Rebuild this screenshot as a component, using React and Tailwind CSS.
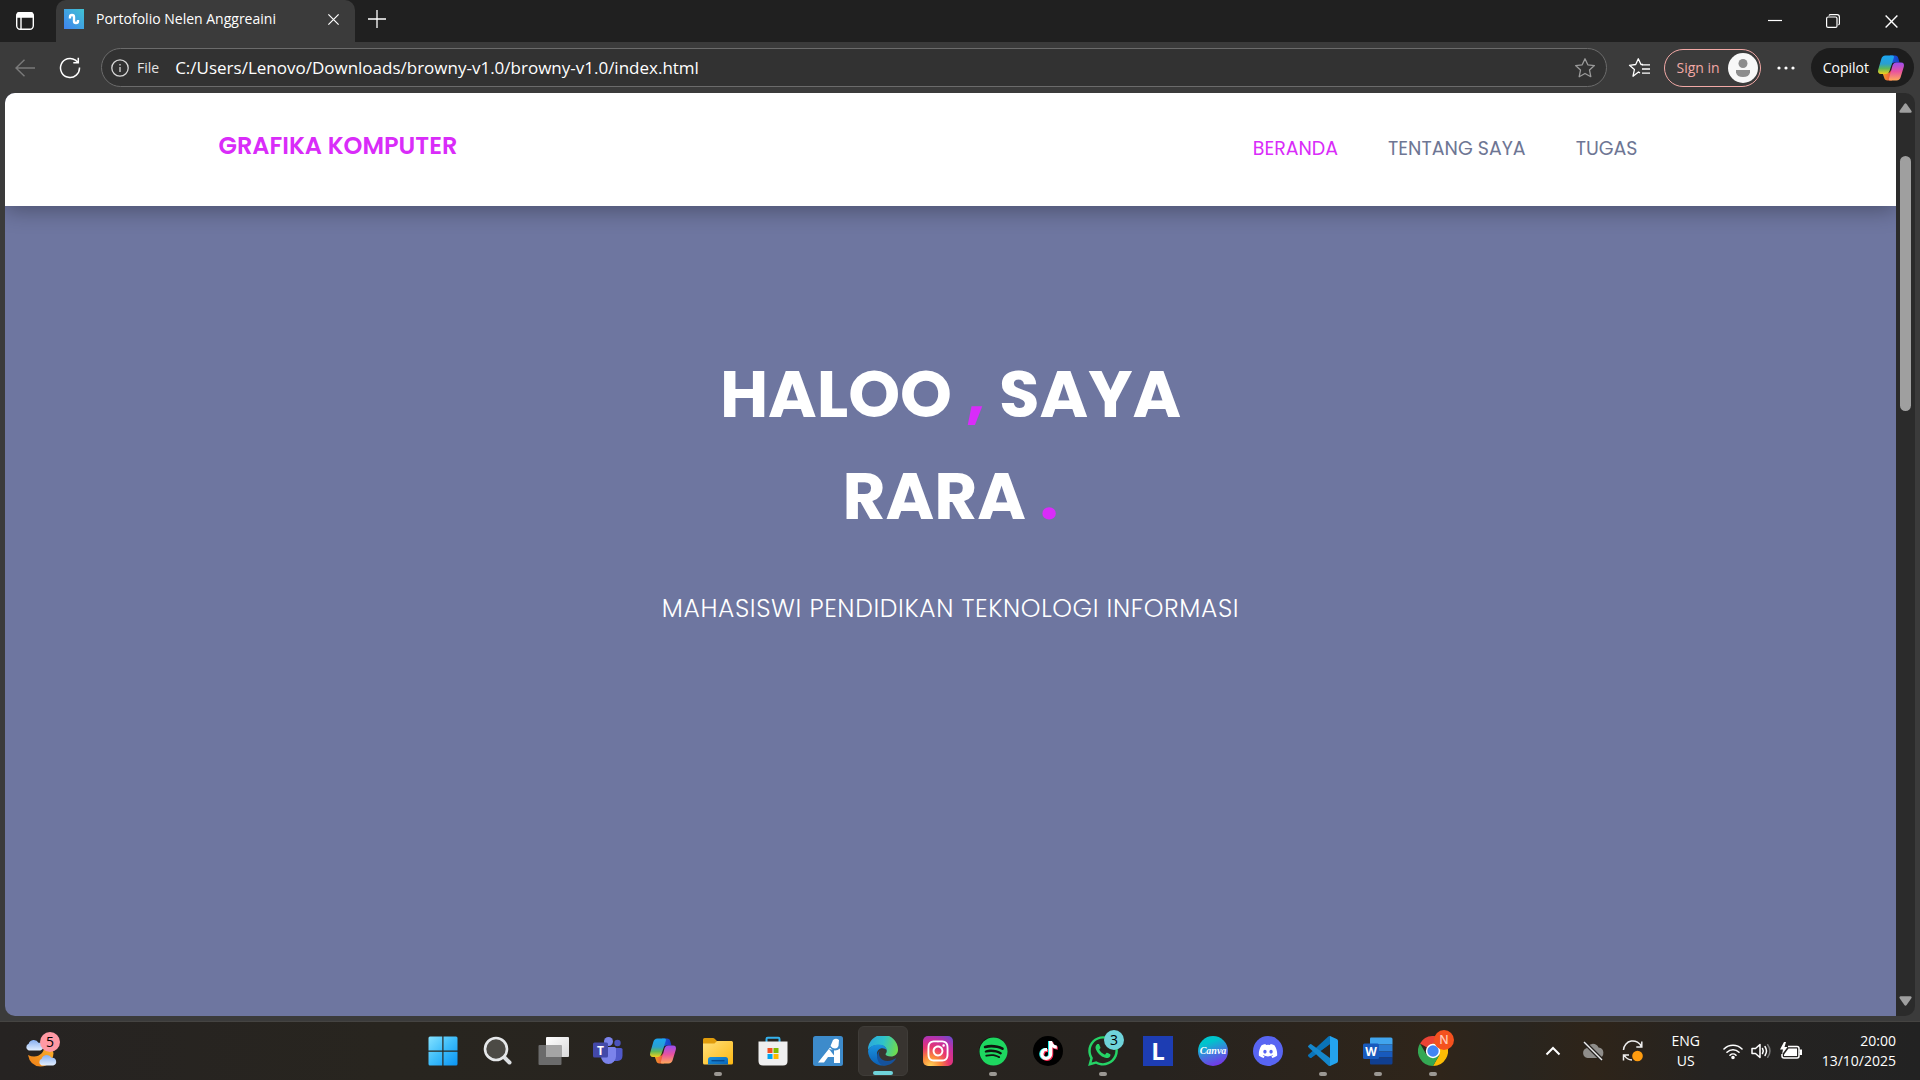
import React from "react";
import { FaInstagram, FaSpotify, FaTiktok, FaWhatsapp, FaDiscord } from "react-icons/fa6";

const UI = "font-['Segoe_UI','Open_Sans','Noto_Sans',sans-serif]";

function TabsIcon() {
  return (
    <svg width="20" height="20" viewBox="0 0 20 20" fill="none" stroke="#fff" strokeWidth="1.4">
      <rect x="1.7" y="1.7" width="16.6" height="16.6" rx="3.5" />
      <path d="M2 3.5a2 2 0 0 1 2-1.8h12a2 2 0 0 1 2 1.8V6H2z" fill="#fff" />
      <path d="M6 6v12" />
    </svg>
  );
}

function CloseIcon({ size = 14 }) {
  return (
    <svg width={size} height={size} viewBox="0 0 14 14" stroke="#fff" strokeWidth="1.3">
      <path d="M1.5 1.5l11 11M12.5 1.5l-11 11" />
    </svg>
  );
}

function StarIcon({ color }) {
  return (
    <svg width="22" height="22" viewBox="0 0 22 22" fill="none" stroke={color} strokeWidth="1.3" strokeLinejoin="round">
      <path d="M11 1.8l2.8 6 6.6.8-4.9 4.5 1.3 6.6L11 16.500l-5.800 3.200 1.300-6.600L1.600 8.600l6.600-.8z" />
    </svg>
  );
}

function CopilotIcon({ size }) {
  return (
    <svg width={size} height={size} viewBox="0 0 28 28">
      <defs>
        <linearGradient id="cpA" x1="0" y1="0" x2="0" y2="1">
          <stop offset="0" stopColor="#1ba6f2" />
          <stop offset=".45" stopColor="#2a9fd0" />
          <stop offset=".7" stopColor="#5fb85a" />
          <stop offset="1" stopColor="#f2cf1d" />
        </linearGradient>
        <linearGradient id="cpB" x1="0" y1="0" x2="0" y2="1">
          <stop offset="0" stopColor="#9a4df0" />
          <stop offset=".5" stopColor="#e8539f" />
          <stop offset="1" stopColor="#ffa95a" />
        </linearGradient>
        <linearGradient id="cpC" x1="0" y1="0" x2="1" y2="0">
          <stop offset="0" stopColor="#1a5be0" />
          <stop offset="1" stopColor="#173fc4" />
        </linearGradient>
        <linearGradient id="cpD" x1="0" y1="0" x2="1" y2="0">
          <stop offset="0" stopColor="#f0a027" />
          <stop offset="1" stopColor="#f0483f" />
        </linearGradient>
      </defs>
      <path d="M13 1.500h5c2 0 2.800 1 3.300 2.700L22.500 8.500h-5c-2 0-3 1-3.500 3z" fill="url(#cpC)" />
      <path d="M15 26.500h-4.500c-2 0-2.800-1-3.300-2.700L5.500 19h5c2 0 3-1 3.500-3z" fill="url(#cpD)" />
      <path d="M8.500 1.500h7c1.300 0 1.700.8 1.300 2.200L12.500 17c-.7 2-2 3-4 3H4c-2.500 0-3.500-1.500-2.800-4.200L4.300 5c.6-2.300 2-3.500 4.200-3.500z" fill="url(#cpA)" />
      <path d="M19.500 8.500H24c2.500 0 3.500 1.500 2.800 4.200L23.700 23c-.6 2.300-2 3.500-4.200 3.500h-6.700c-1 0-1.200-.7-.9-1.700L15.500 11.500c.7-2 2-3 4-3z" fill="url(#cpB)" />
    </svg>
  );
}

function TitleBar() {
  return (
    <header className="flex h-[42px] items-stretch bg-[#202020]">
      <button aria-label="Tab actions" className="flex w-14 items-center justify-start rounded-br-lg pl-[15px]">
        <TabsIcon />
      </button>
      <div className="flex w-[299px] items-center rounded-t-[10px] bg-[#3b3b3b] pr-3 pl-2 pb-1">
        <svg width="20" height="20" viewBox="0 0 20 20">
          <defs>
            <linearGradient id="fav" x1="0" y1="1" x2="1" y2="0">
              <stop offset="0" stopColor="#3f83ef" />
              <stop offset="1" stopColor="#41c3d3" />
            </linearGradient>
          </defs>
          <rect width="20" height="20" fill="url(#fav)" />
          <path d="M6 9.500V8a2 2 0 0 1 4 0v4a2 2 0 0 0 4 0v-1" fill="none" stroke="#fff" strokeWidth="2.400" />
        </svg>
        <span className="ml-3 flex-1 truncate text-sm text-white">Portofolio Nelen Anggreaini</span>
        <button aria-label="Close tab" className="flex size-5 items-center justify-center"><CloseIcon size={13} /></button>
      </div>
      <button aria-label="New tab" className="flex w-11 items-center justify-center pb-1">
        <svg width="18" height="18" viewBox="0 0 18 18" stroke="#fff" strokeWidth="1.3"><path d="M9 0v18M0 9h18" /></svg>
      </button>
      <div className="flex-1" />
      <div className="flex">
        <button aria-label="Minimize" className="flex w-[58px] items-center justify-center">
          <svg width="14" height="14" viewBox="0 0 14 14" stroke="#fff" strokeWidth="1.2"><path d="M0 6.500h14" /></svg>
        </button>
        <button aria-label="Restore" className="flex w-[58px] items-center justify-center">
          <svg width="14" height="14" viewBox="0 0 14 14" fill="none" stroke="#fff" strokeWidth="1.2">
            <rect x=".6" y="3" width="10.400" height="10.400" rx="1.500" />
            <path d="M3 1.600Q3.400.6 4.500.6h6.500a2.400 2.400 0 0 1 2.400 2.400v6.500q0 1-1 1.500" />
          </svg>
        </button>
        <button aria-label="Close" className="flex w-[58px] items-center justify-center"><CloseIcon size={15} /></button>
      </div>
    </header>
  );
}

function Toolbar() {
  return (
    <div className="flex h-[51px] items-center bg-[#3b3b3b] pr-[6px]">
      <button aria-label="Back" className="flex w-[50px] items-center justify-center">
        <svg width="20" height="18" viewBox="0 0 20 18" fill="none" stroke="#7a7a7a" strokeWidth="1.400"><path d="M20 9H1M9.500 .7L1 9l8.500 8.300" /></svg>
      </button>
      <button aria-label="Refresh" className="flex w-10 items-center justify-center">
        <svg width="22" height="22" viewBox="0 0 22 22" fill="none" stroke="#fff" strokeWidth="1.500">
          <path d="M20.500 10.500A9.500 9.500 0 1 1 16.500 3.200L19 5.500M19.300 .8v5h-5" />
        </svg>
      </button>
      <div className="ml-[11px] flex h-[39px] flex-1 items-center rounded-full border border-[#6b6b6b] bg-[#323232] pr-[10px] pl-[9px]">
        <button className="flex items-center gap-2 text-sm text-[#e4e4e4]">
          <svg width="18" height="18" viewBox="0 0 18 18" fill="none" stroke="#d8d8d8" strokeWidth="1.300">
            <circle cx="9" cy="9" r="8.200" /><path d="M9 8v5M9 5v1.600" />
          </svg>
          File
        </button>
        <input aria-label="Address" defaultValue="C:/Users/Lenovo/Downloads/browny-v1.0/browny-v1.0/index.html" className="ml-4 flex-1 bg-transparent text-[17px] text-white outline-none" />
        <button aria-label="Add to favorites"><StarIcon color="#9a9a9a" /></button>
      </div>
      <button aria-label="Favorites" className="ml-5 flex w-6 justify-center">
        <svg width="22" height="22" viewBox="0 0 22 22" fill="none" stroke="#fff" strokeWidth="1.300" strokeLinejoin="round">
          <path d="M12 15.900L10.500 15 5 19.200l1.400-6.600L1.500 8.300l6.200-.8L10.300 1.800l2.700 5.700h2" />
          <path d="M14 7.800h8M14 12h8M14 16.200h8" />
        </svg>
      </button>
      <button className="ml-[13px] flex h-[38px] items-center gap-2 rounded-full border border-[#f2a9a6] pr-[2px] pl-3 text-sm text-[#f2a9a6]">
        Sign in
        <svg width="30" height="30" viewBox="0 0 30 30">
          <circle cx="15" cy="15" r="15" fill="#f8f8f8" />
          <circle cx="15" cy="10.500" r="4.500" fill="#8d8d8d" />
          <path d="M8 17h14v2.500q-1 4.500-7 4.500t-7-4.500z" fill="#8d8d8d" />
        </svg>
      </button>
      <button aria-label="Settings and more" className="flex w-[50px] justify-center">
        <svg width="18" height="4" viewBox="0 0 18 4" fill="#fff"><circle cx="2" cy="2" r="1.600" /><circle cx="9" cy="2" r="1.600" /><circle cx="16" cy="2" r="1.600" /></svg>
      </button>
      <button className="flex h-[39px] items-center gap-2 rounded-full bg-[#1d1d1d] pr-[9px] pl-3 text-sm text-white">
        Copilot
        <CopilotIcon size={28} />
      </button>
    </div>
  );
}

function Page() {
  return (
    <main className="flex flex-1 flex-col overflow-hidden rounded-l-[10px] bg-[#6e76a0] font-['Poppins','Inter',sans-serif]">
      <nav className="bg-white shadow-[0_5px_20px_rgba(0,0,0,0.3)]">
        <div className="mx-auto flex h-[113px] w-full max-w-[1464px] items-center justify-between">
          <a href="#" className="pb-2 text-2xl leading-none font-semibold text-[#d92cf9]">GRAFIKA KOMPUTER</a>
          <ul className="flex text-[19px]">
            <li><a href="#beranda" className="px-[25px] text-[#d92cf9]">BERANDA</a></li>
            <li><a href="#tentang" className="px-[25px] text-[#6e7694]">TENTANG SAYA</a></li>
            <li className="pr-5"><a href="#tugas" className="px-[25px] text-[#6e7694]">TUGAS</a></li>
          </ul>
        </div>
      </nav>
      <section className="flex flex-col items-center pt-[137px] text-center text-white">
        <h1 className="text-[66px] leading-[102px] font-bold">
          HALOO <span className="text-[#d92cf9]">,</span> SAYA<br />
          RARA <span className="text-[#d92cf9]">.</span>
        </h1>
        <p className="mt-[42px] text-[25px] leading-10 font-light tracking-wide">MAHASISWI PENDIDIKAN TEKNOLOGI INFORMASI</p>
      </section>
    </main>
  );
}

function Scrollbar() {
  return (
    <div className="flex w-[19px] flex-col items-center justify-between rounded-r-[10px] bg-[#2b2b2b] py-[10px]">
      <svg width="13" height="10" viewBox="0 0 13 10" fill="#9f9f9f"><path d="M5.200 1.200Q6.500-.5 7.800 1.200L12.500 8Q13 9.500 11.500 9.800H1.500Q0 9.500.5 8z" /></svg>
      <div className="mt-[43px] h-[255px] w-[11px] rounded-full bg-[#9f9f9f]" />
      <div className="flex-1" />
      <svg width="13" height="10" viewBox="0 0 13 10" fill="#9f9f9f"><path d="M5.200 8.800Q6.500 10.500 7.800 8.800L12.500 2Q13 .5 11.500.2H1.500Q0 .5.500 2z" /></svg>
    </div>
  );
}

function WindowsLogo() {
  return (
    <svg width="30" height="30" viewBox="0 0 30 30">
      <defs><linearGradient id="win" x1="0" y1="0" x2="1" y2="1"><stop offset="0" stopColor="#84e2ff" /><stop offset=".5" stopColor="#3cbcfb" /><stop offset="1" stopColor="#0a94f3" /></linearGradient></defs>
      <path d="M2 .5h12.300v14H.5V2Q.5.500 2 .5zM15.500.5H28Q29.500.500 29.500 2v12.500h-14zM.5 15.700h13.800v13.800H2Q.5 29.500.5 28zM15.500 15.700h14V28q0 1.500-1.500 1.500H15.500z" fill="url(#win)" />
    </svg>
  );
}

function SearchLogo() {
  return (
    <svg width="30" height="30" viewBox="0 0 30 30">
      <path d="M20 20l6.500 6.500" stroke="#dcdfe2" strokeWidth="4" strokeLinecap="round" />
      <circle cx="13" cy="13" r="11" fill="#4c4a45" stroke="#e6e8ea" strokeWidth="2.600" />
    </svg>
  );
}

function TaskViewLogo() {
  return (
    <svg width="32" height="30" viewBox="0 0 32 30">
      <defs><linearGradient id="tv" x1="0" y1="0" x2="1" y2="1"><stop offset="0" stopColor="#fff" /><stop offset="1" stopColor="#d9d9d9" /></linearGradient></defs>
      <rect x="9" y="1" width="23" height="20" rx="1" fill="url(#tv)" />
      <rect x="1.500" y="9" width="23" height="20" rx="1" fill="#6b6b6b" />
      <path d="M9 9h15.500v12H9z" fill="#a5a5a5" />
    </svg>
  );
}

function TeamsLogo() {
  return (
    <svg width="30" height="30" viewBox="0 0 30 30">
      <circle cx="24.500" cy="7" r="3.200" fill="#4b53bc" />
      <path d="M20 12h8q1.500 0 1.500 1.500v6q0 5-5 5.500h-4.500z" fill="#5059c9" />
      <circle cx="15.500" cy="5.500" r="4.500" fill="#7b83eb" />
      <path d="M10 11h11.500q1.500 0 1.500 1.500v8a7.500 7.500 0 0 1-15 0z" fill="#7b83eb" />
      <rect y="6.500" width="15" height="15" rx="1.500" fill="#4349a9" />
      <text x="7.500" y="18.500" textAnchor="middle" fontSize="12" fontWeight="700" fill="#fff" fontFamily="Open Sans, sans-serif">T</text>
    </svg>
  );
}

function FolderLogo() {
  return (
    <svg width="30" height="30" viewBox="0 0 30 30">
      <defs>
        <linearGradient id="fd" x1="0" y1="0" x2="1" y2="1"><stop offset="0" stopColor="#ffe07a" /><stop offset="1" stopColor="#fdb813" /></linearGradient>
        <linearGradient id="fb" x1="0" y1="0" x2="1" y2="1"><stop offset="0" stopColor="#1a93dd" /><stop offset="1" stopColor="#0a64b8" /></linearGradient>
      </defs>
      <path d="M1.500 2H10q1 0 1.700.8L14 5H29v6H0V3.500Q0 2 1.500 2z" fill="#e09c0c" />
      <path d="M0 7.500h11.500L14 5h14.500Q30 5 30 6.500v20.500Q30 28.500 28.500 28.500H1.500Q0 28.500 0 27z" fill="url(#fd)" />
      <path d="M5 28.500v-5Q5 21 7.500 21h15Q25 21 25 23.500v5z" fill="url(#fb)" />
      <path d="M8.500 24.700h13" stroke="#064a90" strokeWidth="1.400" />
    </svg>
  );
}

function StoreLogo() {
  return (
    <svg width="30" height="30" viewBox="0 0 30 30">
      <path d="M8.500 6V3q0-1.200 1.200-1.200h10.600q1.200 0 1.200 1.200v3" fill="none" stroke="#35b2ee" strokeWidth="2" />
      <path d="M.5 5.500h29V25q0 4.500-4.500 4.500H5Q.5 29.500.5 25z" fill="#efefef" />
      <path d="M9.500 12h5v5h-5z" fill="#f25022" /><path d="M15.500 12h5v5h-5z" fill="#7fba00" />
      <path d="M9.500 18h5v5h-5z" fill="#00a4ef" /><path d="M15.500 18h5v5h-5z" fill="#ffb900" />
    </svg>
  );
}

function LetterALogo() {
  return (
    <svg width="30" height="30" viewBox="0 0 30 30">
      <rect width="30" height="30" rx="2.500" fill="#3d8bcb" />
      <path d="M20 4q3-2.500 6 0l-.5 6q-1 2.500-3.500 2.500T17.500 10z" fill="#fff" />
      <path d="M17 11.500L5 26.500h6l4-5.500h6v6h6V12.500q-2.500 2-5 2t-5-3z" fill="#fff" />
      <path d="M16 13l5 6.500V14z" fill="#3d8bcb" />
    </svg>
  );
}

function EdgeLogo() {
  return (
    <svg width="30" height="30" viewBox="0 0 30 30">
      <defs>
        <linearGradient id="eg1" x1="0" y1=".3" x2="1" y2=".5"><stop offset="0" stopColor="#2aa7de" /><stop offset=".5" stopColor="#2fc3c9" /><stop offset="1" stopColor="#6fdc4e" /></linearGradient>
        <linearGradient id="eg2" x1="0" y1="0" x2="0" y2="1"><stop offset="0" stopColor="#1a93e0" /><stop offset="1" stopColor="#0c5fb5" /></linearGradient>
      </defs>
      <path d="M0 14A15 15 0 0 1 30 13.500c.2 4-3 7-7 7-3.500 0-5.500-1.200-5.500-2.300 0-.8 1.300-1.200 1.300-3.500 0-2.700-3-5.700-7.300-5.700C5.500 9 1.500 11 0 14z" fill="url(#eg1)" />
      <path d="M0 15C1 10.500 6 8.500 11 8.500c4.500 0 7.800 2.800 7.800 6-1-1.500-2.500-2.200-4.300-2.200-5 0-7 5-4.500 10 1.500 3.500 4.500 6 8 7A15 15 0 0 1 0 15z" fill="url(#eg2)" />
      <path d="M12 14.500c-3 4 .5 10.500 7.500 10.500 3.500 0 6.500-1.500 8.700-3-2.500 5.500-8 8-13 7.500-6-2-8.700-11-3.200-15z" fill="#15529c" />
    </svg>
  );
}

function InstagramLogo() {
  return (
    <span className="flex size-[30px] items-center justify-center rounded-[5px] bg-[radial-gradient(circle_at_25%_100%,#ffd45a_0%,#fb8a3a_25%,#e8356f_50%,#c32fa5_72%,#5b50d6_100%)]">
      <FaInstagram className="size-6 text-white" />
    </span>
  );
}

function SpotifyLogo() {
  return (
    <span className="flex size-[30px] items-center justify-center rounded-full">
      <span className="flex size-[28px] items-center justify-center rounded-full bg-[#10150f]"><FaSpotify className="size-[29px] shrink-0 text-[#1ed760]" /></span>
    </span>
  );
}

function TiktokLogo() {
  return (
    <span className="relative flex size-[30px] items-center justify-center rounded-full bg-black">
      <FaTiktok className="absolute top-[5px] left-[5px] size-[19px] text-[#25f4ee]" />
      <FaTiktok className="absolute top-[6px] left-[7px] size-[19px] text-[#fe2c55]" />
      <FaTiktok className="absolute top-[5px] left-[6px] size-[19px] text-white" />
    </span>
  );
}

function WhatsappLogo() {
  return (
    <span className="relative flex size-[30px] items-center justify-center">
      <FaWhatsapp className="size-[34px] shrink-0 text-[#25d366]" />
      <span className="absolute -top-[6px] left-4 flex size-5 items-center justify-center rounded-full bg-[#6fd3da] text-sm text-black">3</span>
    </span>
  );
}

function LetterLLogo() {
  return (
    <span className="flex size-[30px] items-center justify-center bg-[#1d3db3] font-['Open_Sans',sans-serif] text-2xl leading-none font-bold text-white">L</span>
  );
}

function CanvaLogo() {
  return (
    <span className="flex size-[30px] items-center justify-center rounded-full bg-[linear-gradient(160deg,#00c4cc_25%,#4a6fe0_60%,#7d2ae8_95%)] font-['Liberation_Serif',serif] text-[10px] leading-none font-bold text-white italic">Canva</span>
  );
}

function DiscordLogo() {
  return (
    <span className="flex size-[30px] items-center justify-center rounded-full bg-[#5865f2]"><FaDiscord className="size-5 text-white" /></span>
  );
}

function CodeLogo() {
  return (
    <svg width="30" height="30" viewBox="0 0 30 30">
      <path d="M22 0L6.500 14.500 1.500 18.800Q1 19.200.5 18.700L.2 18.200Q0 20 .3 20.300l1.700 1.500q.6.500 1.300 0L22 8z" fill="#0065a9" />
      <path d="M22 8L3.300 21.800q-.7.500-1.300 0L.4 20.300q-.8-.8 0-1.600L20.300.6Q21.200-.2 22.500.2z" fill="#0a73b8" />
      <path d="M22 22L3.300 8.200q-.7-.500-1.300 0L.4 9.700q-.8.800 0 1.600L20.300 29.400q.9.800 2.200.4z" fill="#1587cc" />
      <path d="M22 0l6.700 3.100q1.300.6 1.300 2v19.800q0 1.400-1.300 2L22 30z" fill="#24a3ee" />
    </svg>
  );
}

function WordLogo() {
  return (
    <svg width="30" height="30" viewBox="0 0 30 30">
      <path d="M8 1.500h20q1.500 0 1.500 1.500v5.500H7V2.500q0-1 1-1z" fill="#41a5ee" />
      <path d="M7 8.500h22.500v7H7z" fill="#2b7cd3" />
      <path d="M7 15.500h22.500v6H7z" fill="#185abd" />
      <path d="M7 21.500h22.500V27q0 1.500-1.500 1.500H8q-1 0-1-1z" fill="#103f91" />
      <rect y="7.500" width="16" height="15.500" rx="1.500" fill="#185abd" />
      <text x="8" y="19.500" textAnchor="middle" fontSize="12" fontWeight="700" fill="#fff" fontFamily="Open Sans, sans-serif">W</text>
    </svg>
  );
}

function ChromeLogo() {
  return (
    <span className="relative size-[30px]">
      <svg width="30" height="30" viewBox="0 0 30 30">
        <path d="M15 15L2 7.500A15 15 0 0 1 28 7.500H15z" fill="#ea4335" />
        <path d="M15 15l6.500 3.700L15 30A15 15 0 0 0 28 7.500H15z" fill="#fbbc05" />
        <path d="M15 15l6.500 3.700L15 30A15 15 0 0 1 2 7.500l6.500 11.200z" fill="#34a853" />
        <circle cx="15" cy="15" r="7.200" fill="#fff" /><circle cx="15" cy="15" r="5.700" fill="#4285f4" />
      </svg>
      <span className="absolute -top-[6px] left-4 flex size-5 items-center justify-center rounded-full bg-[#f4511e] text-xs font-semibold text-[#ffc9b8]">N</span>
    </span>
  );
}

const APPS = [
  { name: "Start", icon: <WindowsLogo /> },
  { name: "Search", icon: <SearchLogo /> },
  { name: "Task View", icon: <TaskViewLogo /> },
  { name: "Teams", icon: <TeamsLogo /> },
  { name: "Copilot", icon: <CopilotIcon size={28} /> },
  { name: "File Explorer", icon: <FolderLogo />, open: true },
  { name: "Microsoft Store", icon: <StoreLogo /> },
  { name: "Assistant", icon: <LetterALogo /> },
  { name: "Edge", icon: <EdgeLogo />, active: true },
  { name: "Instagram", icon: <InstagramLogo /> },
  { name: "Spotify", icon: <SpotifyLogo />, open: true },
  { name: "TikTok", icon: <TiktokLogo /> },
  { name: "WhatsApp", icon: <WhatsappLogo />, open: true },
  { name: "Lenovo", icon: <LetterLLogo /> },
  { name: "Canva", icon: <CanvaLogo /> },
  { name: "Discord", icon: <DiscordLogo /> },
  { name: "Visual Studio Code", icon: <CodeLogo />, open: true },
  { name: "Word", icon: <WordLogo />, open: true },
  { name: "Chrome", icon: <ChromeLogo />, open: true },
];

function AppButton({ app }) {
  return (
    <button
      aria-label={app.name}
      className={
        app.active
          ? "relative flex size-[50px] items-center justify-center rounded-md border border-[#3f3c38] bg-[#383430]"
          : "relative flex size-[50px] items-center justify-center"
      }
    >
      {app.icon}
      {app.active && <span className="absolute bottom-0 h-1 w-5 rounded-full bg-[#6fd3da]" />}
      {app.open && <span className="absolute bottom-0 h-1 w-2 rounded-full bg-[#9b9893]" />}
    </button>
  );
}

function Cloud({ x, y, s }) {
  return (
    <path transform={`translate(${x} ${y}) scale(${s})`} d="M3.500 11A3.400 3.400 0 0 1 3.500 4.600 5 5 0 0 1 12.800 3.600 3.800 3.800 0 0 1 14.500 11z" fill="url(#cl)" />
  );
}

function Taskbar() {
  return (
    <footer className="flex h-[59px] items-center border-t border-[#454442] bg-[linear-gradient(90deg,#262322_0%,#28251f_20%,#27231f_60%,#2f251a_75%,#29251f_79%,#2e2419_83%,#252321_89%,#222222_100%)]">
      <div className="flex-1">
        <button aria-label="Weather" className="relative ml-[25px] block size-8">
          <svg width="32" height="32" viewBox="0 0 32 32">
            <defs>
              <linearGradient id="cl" x1="0" y1="0" x2="0" y2="1"><stop offset="0" stopColor="#86aef0" /><stop offset="1" stopColor="#e3efff" /></linearGradient>
              <linearGradient id="mn" x1="0" y1="1" x2="1" y2="0"><stop offset="0" stopColor="#ee7d16" /><stop offset="1" stopColor="#fbb52e" /></linearGradient>
            </defs>
            <path d="M3 20q8 4 14-2 3-4 2-9 8 1 9.500 9-1 13-13 13.500Q5 31 3 20z" fill="url(#mn)" />
            <Cloud x={0} y={4} s={1.05} />
            <Cloud x={13} y={19} s={1.05} />
          </svg>
          <span className="absolute -top-[3px] left-[15px] flex size-5 items-center justify-center rounded-full bg-[#ff99a4] text-sm text-black">5</span>
        </button>
      </div>
      <div className="flex shrink-0 gap-[5px]">
        {APPS.map((app) => <AppButton key={app.name} app={app} />)}
      </div>
      <div className="flex w-[462px] items-center justify-end pr-6 text-white">
        <button aria-label="Show hidden icons" className="flex w-10 justify-center">
          <svg width="16" height="10" viewBox="0 0 16 10" fill="none" stroke="#fff" strokeWidth="2"><path d="M1.500 8.500L8 2l6.500 6.500" /></svg>
        </button>
        <button aria-label="Cloud storage" className="flex w-10 justify-center">
          <svg width="22" height="20" viewBox="0 0 22 20">
            <path d="M5.500 17A5 5 0 0 1 4.500 7.300 6.500 6.500 0 0 1 16.500 6.500 5.300 5.300 0 0 1 17 17z" fill="#8f8d8a" />
            <path d="M2 1l18 18" stroke="#27231f" strokeWidth="4" /><path d="M2 1l18 18" stroke="#eee" strokeWidth="1.400" />
          </svg>
        </button>
        <button aria-label="Update" className="flex w-10 justify-center">
          <svg width="22" height="22" viewBox="0 0 22 22" fill="none" stroke="#eee" strokeWidth="1.500">
            <path d="M1.500 10A9.300 9.300 0 0 1 19.500 7M19.800 1.500V7h-5.500M10 20a9 9 0 0 1-7.500-4.500M1.500 20.500V15h5.500" />
            <circle cx="15.500" cy="16" r="5.300" fill="#ff9c0f" stroke="none" />
          </svg>
        </button>
        <button className="mr-3 ml-2 w-[50px] text-center text-sm leading-5">ENG<br />US</button>
        <button aria-label="Network, volume and battery" className="flex items-center gap-2">
          <svg width="20" height="18" viewBox="0 0 20 18" fill="none" stroke="#fff" strokeWidth="1.600" strokeLinecap="round">
            <path d="M1 7a12.800 12.800 0 0 1 18 0M4 10.200a8.600 8.600 0 0 1 12 0M7 13.200a4.300 4.300 0 0 1 6 0" /><circle cx="10" cy="15.500" r="1" fill="#fff" />
          </svg>
          <svg width="21" height="18" viewBox="0 0 21 18" fill="none" stroke="#fff" strokeWidth="1.500" strokeLinejoin="round" strokeLinecap="round">
            <path d="M1 6.500h3.500L9 2.500v13L4.500 11.500H1zM11.500 6.500q1.500 2.500 0 5M14 4.500q3 4.500 0 9" /><path d="M16.700 2.700q4.500 6.300 0 12.600" stroke="#777" />
          </svg>
          <svg width="22" height="18" viewBox="0 0 22 18" fill="none" stroke="#fff" strokeWidth="1.500">
            <path d="M8 4.500h9q2 0 2 2V14q0 2-2 2H4q-2 0-2-2v-2" /><path d="M19.500 8.500h1.500v3.500h-1.500" strokeWidth="2" />
            <path d="M8.500 6.500h8.500V14H4v-1.500z" fill="#fff" stroke="none" />
            <path d="M4 0L0 7.500h3L2 12.500 7.500 5h-3L6 0z" fill="#fff" stroke="none" />
          </svg>
        </button>
        <button className="ml-5 text-right text-sm leading-5">20:00<br />13/10/2025</button>
      </div>
    </footer>
  );
}

export default function App() {
  return (
    <div className={`flex min-h-screen flex-col bg-[#3b3b3b] ${UI}`}>
      <TitleBar />
      <Toolbar />
      <div className="mb-[5px] ml-[5px] mr-[5px] flex flex-1">
        <Page />
        <Scrollbar />
      </div>
      <Taskbar />
    </div>
  );
}
